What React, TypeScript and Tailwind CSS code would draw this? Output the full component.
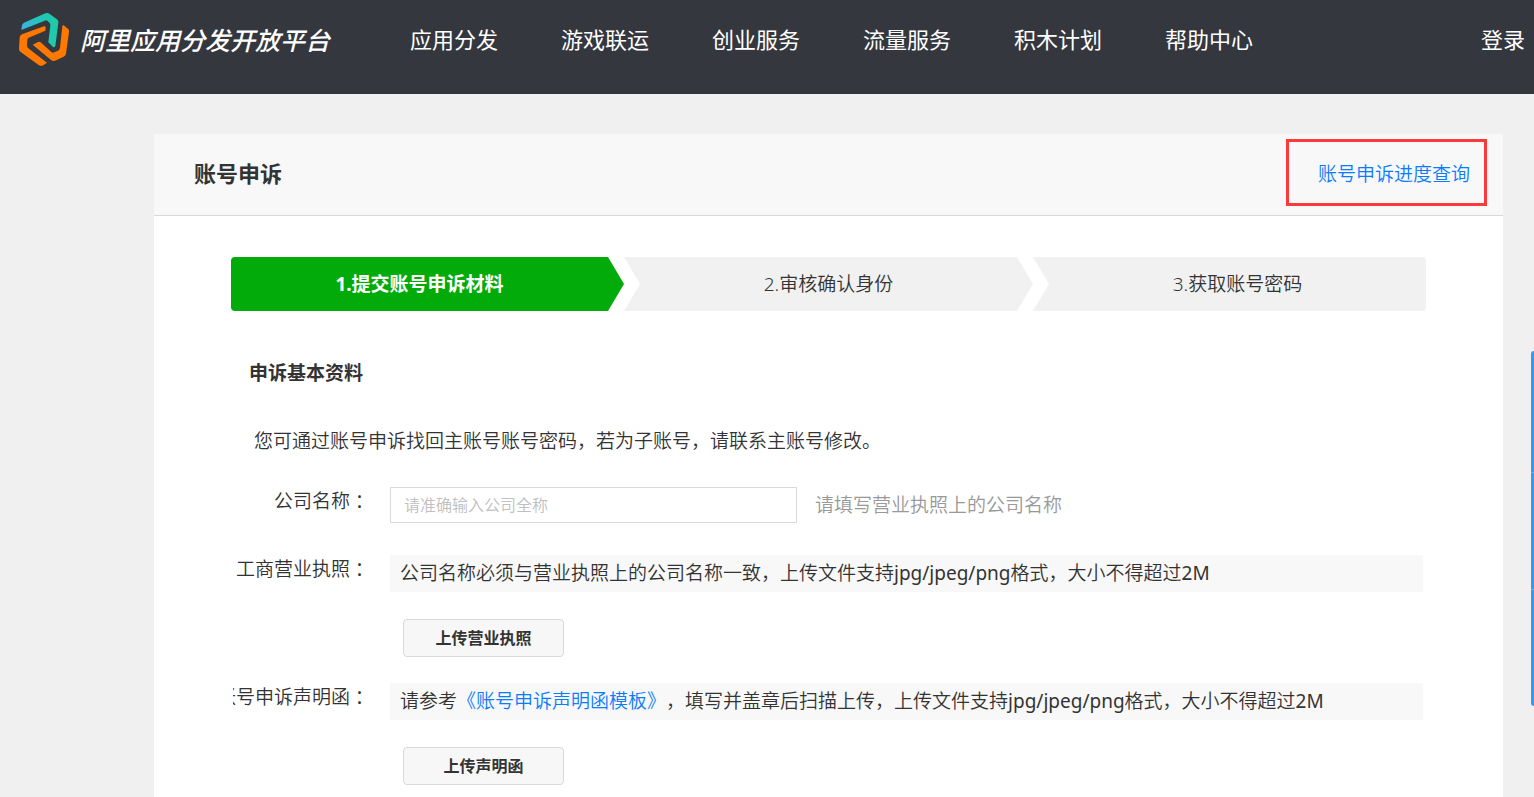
import React from 'react';
import clsx from 'clsx';

const navItems = ['应用分发', '游戏联运', '创业服务', '流量服务', '积木计划', '帮助中心'];

const steps = ['1.提交账号申诉材料', '2.审核确认身份', '3.获取账号密码'];

const Logo: React.FC = () => (
  <a href="#" className="flex items-center">
    <svg viewBox="0 0 210 210" className="h-[70px] w-[70px]" aria-hidden="true">
      <defs>
        <linearGradient id="logo-top" x1="0" y1="0" x2="1" y2="0">
          <stop offset="0" stopColor="#3db4e0" />
          <stop offset="0.6" stopColor="#20c8b4" />
          <stop offset="1" stopColor="#1ccba6" />
        </linearGradient>
      </defs>
      <path
        fill="url(#logo-top)"
        d="M34 75 L36 61 Q37 56 42 53 L106 25 Q113 22 118 26 L141 43 Q146 47 145 53 L136 123 Q134 128 129 126 L115 112 L121 62 Q122 56 117 52 L112 47 Q109 45 104 47 Z"
      />
      <path
        fill="#ff7800"
        d="M104 63 Q107 64 107 69 L106 77 L56 98 Q52 100 52 105 L51 121 Q51 127 55 130 L111 173 L100 181 Q94 184 87 181 L31 140 Q27 137 27 131 L29 97 Q30 91 36 88 Z"
      />
      <path
        fill="#ff7800"
        d="M160 60 L174 71 Q178 74 177 80 L168 146 Q167 152 161 155 L135 167 Q129 170 124 166 L68 119 L84 111 Q88 109 92 112 L124 141 Q128 144 133 142 L144 137 Q149 134 150 128 L157 64 Q158 61 160 60 Z"
      />
    </svg>
    <span className="text-[25px] font-medium italic">阿里应用分发开放平台</span>
  </a>
);

interface StepProps {
  text: string;
  active: boolean;
  hasPrev: boolean;
  hasNext: boolean;
}

const Step: React.FC<StepProps> = ({ text, active, hasPrev, hasNext }) => (
  <li
    className={clsx(
      'relative flex h-[54px] flex-1 items-center justify-center',
      active ? 'bg-[#02ab09] font-bold text-white' : 'bg-[#f1f1f1]',
      !hasPrev && 'rounded-l',
      !hasNext && 'rounded-r'
    )}
  >
    {hasPrev && (
      <span className="absolute top-0 right-full border-y-[27px] border-l-[16px] border-y-[#f1f1f1] border-l-transparent" />
    )}
    {text}
    {hasNext && (
      <span
        className={clsx(
          'absolute top-0 left-full border-y-[27px] border-l-[16px] border-y-transparent',
          active ? 'border-l-[#02ab09]' : 'border-l-[#f1f1f1]'
        )}
      />
    )}
  </li>
);

interface FieldProps {
  label: string;
  htmlFor: string;
  children: React.ReactNode;
}

const Field: React.FC<FieldProps> = ({ label, htmlFor, children }) => (
  <div className="flex items-start gap-[21px]">
    <label
      htmlFor={htmlFor}
      className="flex w-[136px] shrink-0 justify-end overflow-hidden leading-7 whitespace-nowrap"
    >
      {label}
      <span className="font-['Noto_Sans_CJK_TC',sans-serif]">：</span>
    </label>
    <div className="min-w-0 flex-1">{children}</div>
  </div>
);

interface UploadProps {
  id: string;
  text: string;
  children: React.ReactNode;
}

const Upload: React.FC<UploadProps> = ({ id, text, children }) => (
  <>
    <p className="bg-[#f8f8f8] px-[10px] leading-[37px]">
      {children}，上传文件支持<span className="font-normal">jpg/jpeg/png</span>
      格式，大小不得超过<span className="font-normal">2M</span>
    </p>
    <button
      id={id}
      type="button"
      className="mt-[27px] ml-[13px] h-[38px] w-[161px] rounded-sm border border-[#d9d9d9] bg-[#f7f7f7] text-base font-bold"
    >
      {text}
    </button>
  </>
);

export default function App() {
  return (
    <div
      lang="zh-CN"
      className="min-h-screen bg-[#f0f0f0] font-['Noto_Sans','Noto_Sans_CJK_SC',sans-serif] text-[19px] leading-7 font-[350] text-[#333] [text-spacing-trim:space-all]"
    >
      <header className="flex h-[94px] items-start bg-[#35373f] pt-[5px] pr-[9px] pl-[10px] whitespace-nowrap text-white">
        <Logo />
        <nav className="ml-20 flex h-[68px] flex-1 items-center gap-[63px] text-[22px] font-normal">
          {navItems.map((item) => (
            <a key={item} href="#">
              {item}
            </a>
          ))}
          <a href="#" className="ml-auto">
            登录
          </a>
        </nav>
      </header>

      <main className="mt-10 mr-[31px] ml-[154px] bg-white pb-10">
        <div className="flex h-[82px] items-center justify-between border-b border-[#d9d9d9] bg-[#f8f8f8] pr-4 pl-10">
          <h1 className="pb-[3px] text-[22px] font-bold">账号申诉</h1>
          <a
            href="#"
            className="mb-1 flex h-[67px] items-center border-3 border-[#fc3a3a] pt-[2px] pr-[14px] pl-[29px] text-[#0a7cff]"
          >
            账号申诉进度查询
          </a>
        </div>

        <ol className="mx-[77px] mt-[41px] flex gap-8">
          {steps.map((text, i) => (
            <Step
              key={text}
              text={text}
              active={i === 0}
              hasPrev={i > 0}
              hasNext={i < steps.length - 1}
            />
          ))}
        </ol>

        <form className="mt-12 pr-20 pl-[79px]">
          <h2 className="pl-4 font-bold">申诉基本资料</h2>
          <p className="mt-10 pl-[21px]">
            您可通过账号申诉找回主账号账号密码，若为子账号，请联系主账号修改。
          </p>

          <div className="mt-8 flex flex-col">
            <Field label="公司名称" htmlFor="company">
              <div className="flex items-center gap-[18px]">
                <input
                  id="company"
                  type="text"
                  placeholder="请准确输入公司全称"
                  className="h-9 w-[407px] border border-[#d9d9d9] bg-white px-[13px] text-base placeholder:text-[#c0c0c0]"
                />
                <span className="text-[#999]">请填写营业执照上的公司名称</span>
              </div>
            </Field>
            <div className="mt-8">
              <Field label="工商营业执照" htmlFor="license">
                <Upload id="license" text="上传营业执照">
                  公司名称必须与营业执照上的公司名称一致
                </Upload>
              </Field>
            </div>
            <div className="mt-[26px]">
              <Field label="账号申诉声明函" htmlFor="statement">
                <Upload id="statement" text="上传声明函">
                  请参考
                  <a href="#" className="text-[#0a7cff]">
                    《账号申诉声明函模板》
                  </a>
                  ，填写并盖章后扫描上传
                </Upload>
              </Field>
            </div>
          </div>
        </form>
      </main>

      {/* side toolbar, collapsed against the window edge */}
      <aside className="fixed top-[351px] right-0 w-[3px] divide-y divide-[#69aef0] overflow-hidden rounded-l-sm bg-[#3d97ee]">
        <div className="h-[122px]" />
        <div className="h-[117px]" />
        <div className="h-[116px]" />
      </aside>
    </div>
  );
}
